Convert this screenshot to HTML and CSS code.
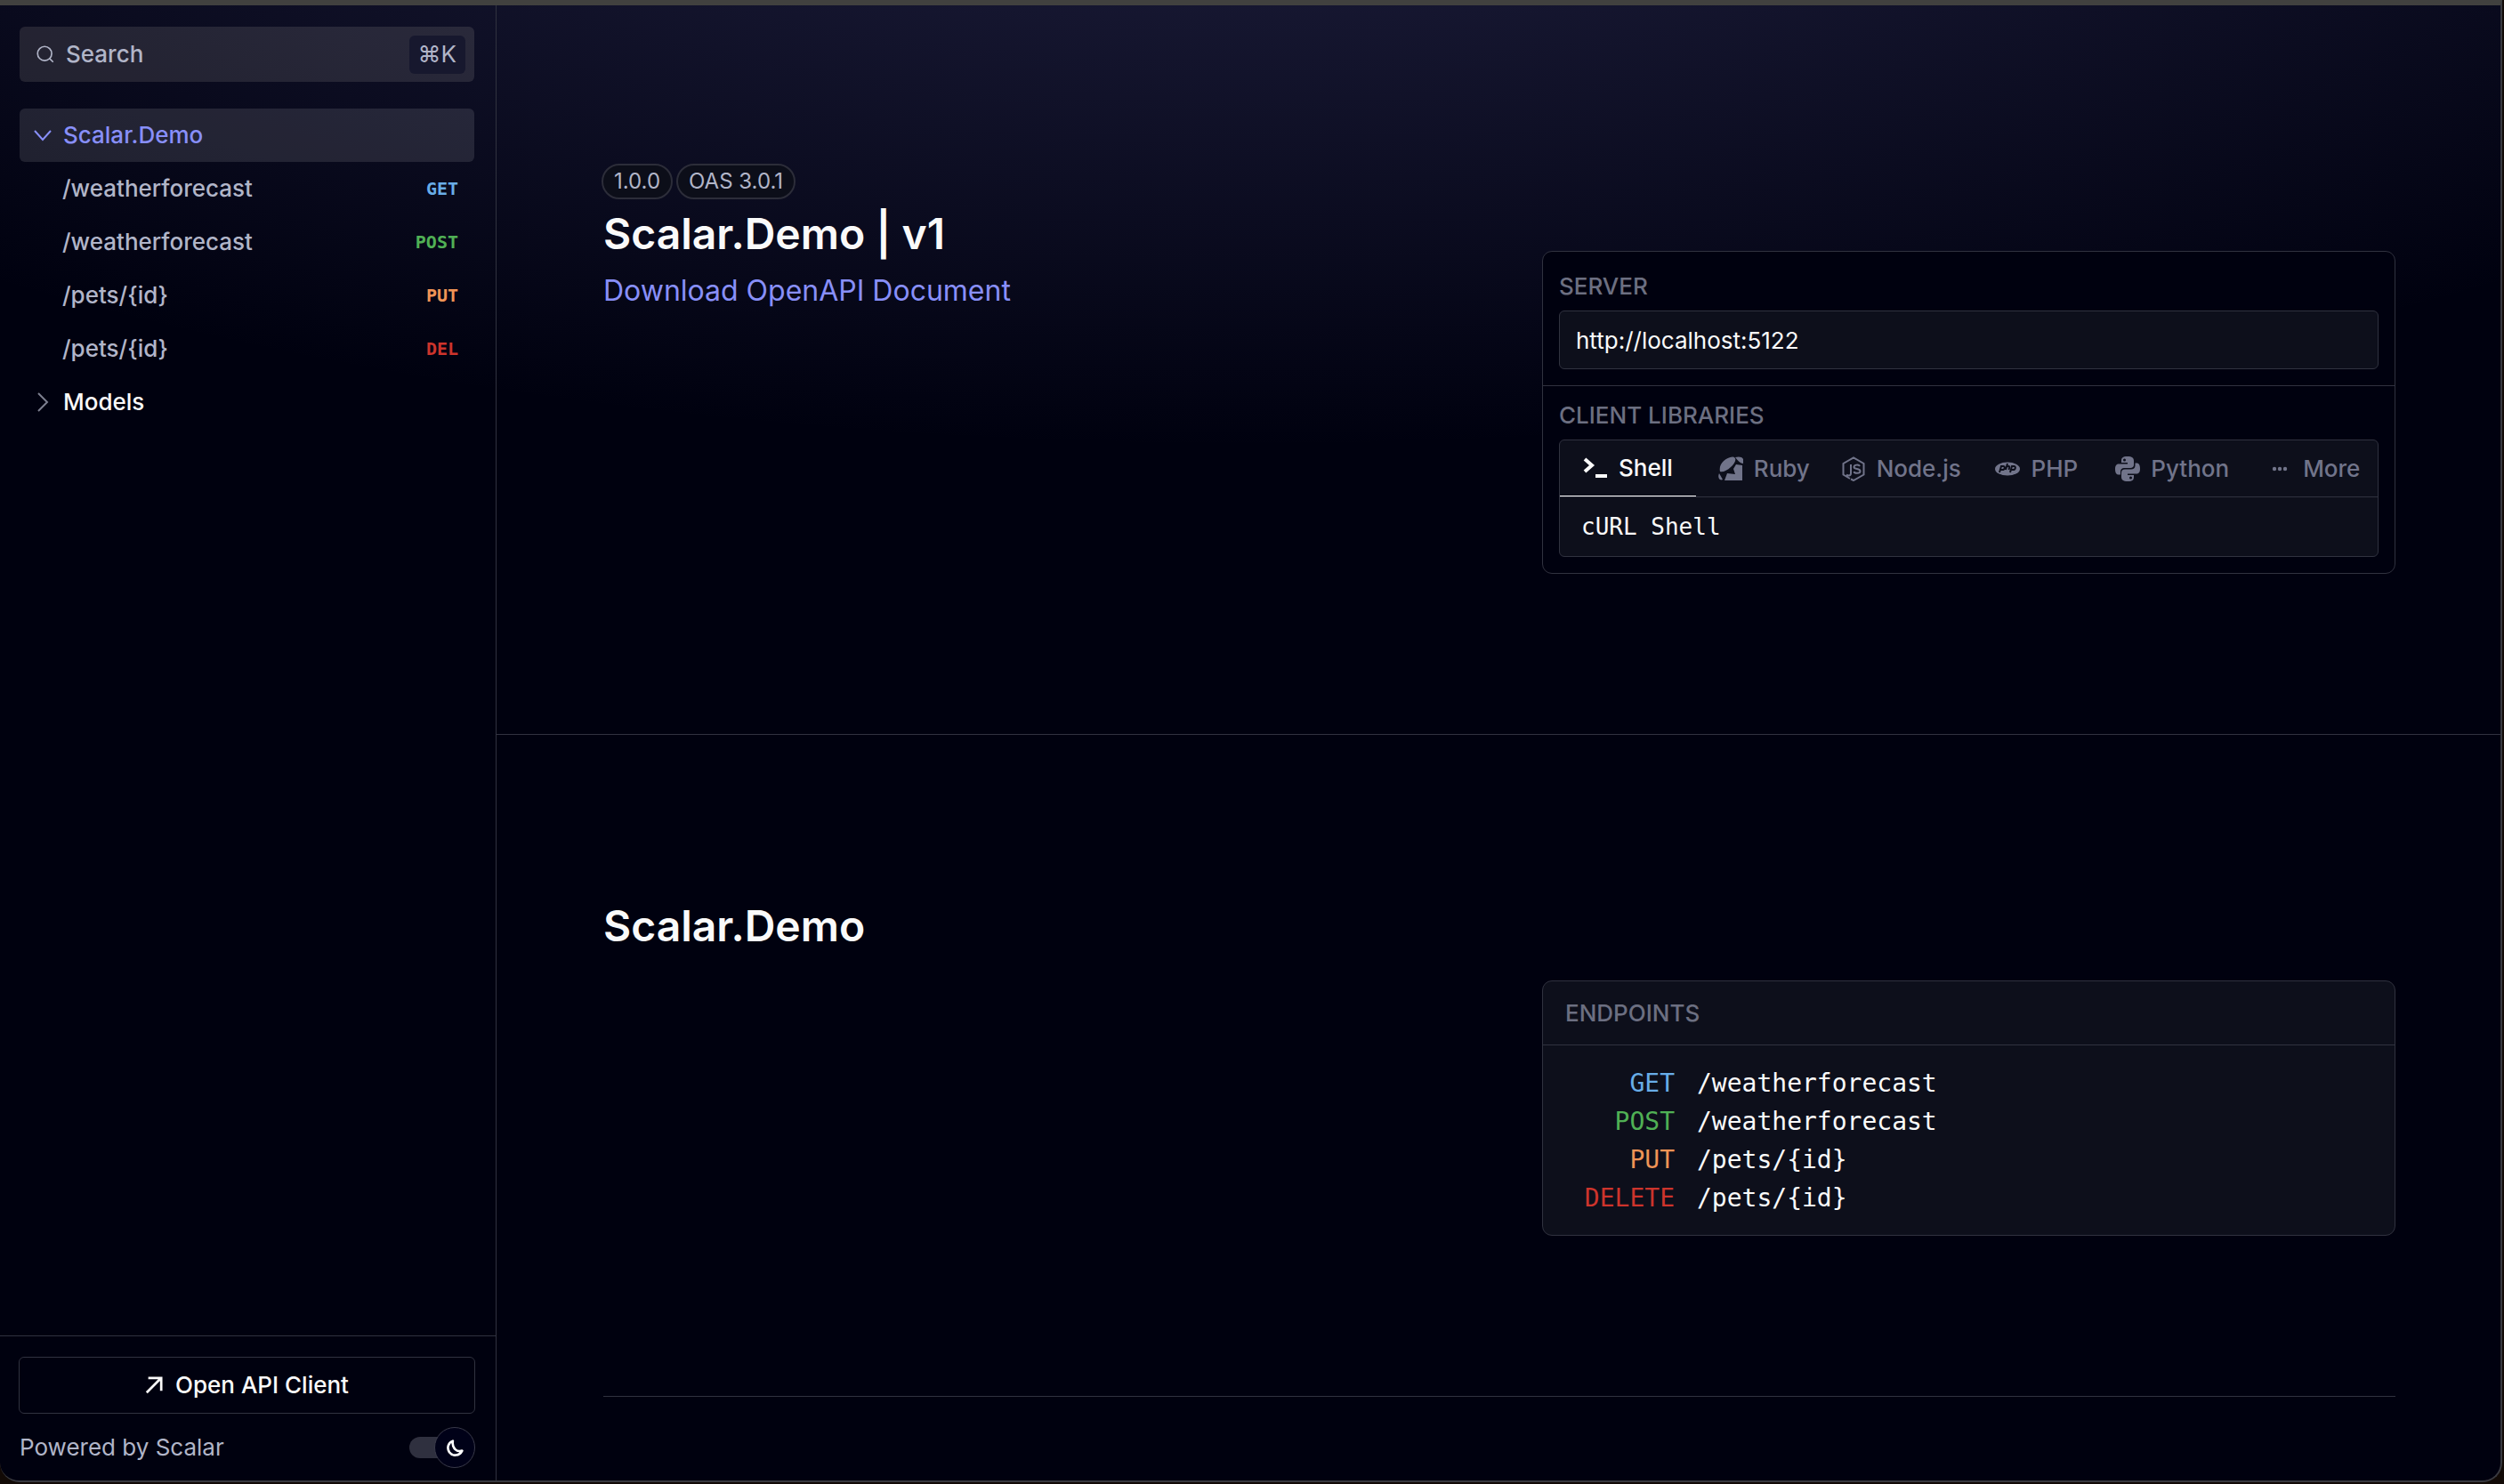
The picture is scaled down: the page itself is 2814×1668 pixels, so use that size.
FILE: index.html
```html
<!DOCTYPE html>
<html lang="en">
<head>
<meta charset="utf-8">
<title>Scalar.Demo | v1</title>
<meta name="viewport" content="width=device-width, initial-scale=1">
<link rel="stylesheet" href="styles.css">
</head>
<body>
<div class="window">
  <aside class="sidebar">
    <button class="search" type="button">
      <svg class="search-icon" viewBox="0 0 24 24" aria-hidden="true"><circle cx="11" cy="11" r="9.500"/><path d="M17.5 17.5l5 5"/></svg>
      <span class="search-label">Search</span>
      <kbd class="shortcut">⌘K</kbd>
    </button>
    <nav class="nav">
      <a class="nav-item nav-group active" href="#demo">
        <svg class="chevron" viewBox="0 0 20 24" aria-hidden="true"><path d="M1 7l9 10 9-10"/></svg>
        <span>Scalar.Demo</span>
      </a>
      <a class="nav-item" href="#get"><span>/weatherforecast</span><span class="verb get">GET</span></a>
      <a class="nav-item" href="#post"><span>/weatherforecast</span><span class="verb post">POST</span></a>
      <a class="nav-item" href="#put"><span>/pets/{id}</span><span class="verb put">PUT</span></a>
      <a class="nav-item" href="#delete"><span>/pets/{id}</span><span class="verb delete">DEL</span></a>
      <a class="nav-item nav-group models" href="#models">
        <svg class="chevron" viewBox="0 0 20 24" aria-hidden="true"><path d="M5 2l10 10-10 10"/></svg>
        <span>Models</span>
      </a>
    </nav>
    <footer class="sidebar-footer">
      <button class="client-button" type="button">
        <svg class="arrow" viewBox="0 0 22 22" aria-hidden="true"><path d="M2 20L20 2M4 2h16v16"/></svg>
        <span>Open API Client</span>
      </button>
      <div class="credits">
        <a class="powered" href="#scalar">Powered by Scalar</a>
        <button class="theme-toggle" type="button" aria-label="Toggle dark mode">
          <span class="track"></span>
          <span class="knob"><svg class="moon" viewBox="0 0 24 24" aria-hidden="true"><path d="M9 3C3 5 1 12 4.500 17.500C8.500 23 17.500 22.500 21 15.500C14 18 7.500 12 9 3Z"/></svg></span>
        </button>
      </div>
    </footer>
  </aside>
  <main class="content">
    <section class="intro">
      <div class="intro-text">
        <div class="badges"><span class="badge">1.0.0</span><span class="badge">OAS 3.0.1</span></div>
        <h1 class="heading">Scalar.Demo | v1</h1>
        <a class="download" href="#openapi">Download OpenAPI Document</a>
      </div>
      <div class="card setup">
        <div class="block">
          <label class="caption" for="server">Server</label>
          <input class="server" id="server" type="text" value="http://localhost:5122">
        </div>
        <div class="block">
          <div class="caption">Client Libraries</div>
          <div class="libraries">
            <div class="tabs">
              <button class="tab selected" type="button">
                <svg viewBox="0 0 28 28" aria-hidden="true"><path d="M2 4l8 7-8 7" fill="none" stroke="currentColor" stroke-width="4"/><path d="M14 21h13v4H14z"/></svg>
                <span>Shell</span>
              </button>
              <button class="tab" type="button">
                <svg viewBox="0 0 28 28" aria-hidden="true"><path d="M2 17C0 9 8 1 16 .5C22 1 19 8 14 12C10 16 5 18 2 17ZM19 1C22 0 27 0 28 3L28 8C25 8 22 5 19 1ZM27 10L27 27L7 27L10 19L19 20L17 14L20 9ZM1 19L5 26C1 28-1 23 1 19Z"/></svg>
                <span>Ruby</span>
              </button>
              <button class="tab" type="button">
                <svg class="line" viewBox="0 0 28 28" aria-hidden="true"><path d="M10 25L2.500 20.500V8L14 1.500L25.500 8V20.500L14 27L11 25.500M11 9V19C11 22 8 22 6 20.500M21 11C20 9 14.500 9 14.500 12C14.500 15 21.500 13 21.500 16.500C21.500 19.500 15 19.500 14.500 17"/></svg>
                <span>Node.js</span>
              </button>
              <button class="tab" type="button">
                <svg viewBox="0 0 28 28" aria-hidden="true"><ellipse cx="14" cy="14" rx="14" ry="7.500"/><path class="cut" d="M5 18L7 11H9C12 11 11 15 8.500 15H6M12 15L14 8M13 11.500C17 10 16.500 12 15.500 15M17 18L19 11H21C24 11 23 15 20.500 15H18"/></svg>
                <span>PHP</span>
              </button>
              <button class="tab" type="button">
                <svg viewBox="0 0 28 28" aria-hidden="true"><path d="M14 0C8 0 7 2 7 5V7H14V8.500H4C1 8.500 0 11 0 14C0 18 1 20.500 4 20.500H6V17C6 14.500 8 13 10 13H17C19.500 13 21 11.500 21 9.500V5C21 1.500 19 0 14 0Z"/><path d="M14 28C20 28 21 26 21 23V21H14V19.500H24C27 19.500 28 17 28 14C28 10 27 7.500 24 7.500H22.500V10.500C22.500 13 20.500 14.500 18 14.500H11C8.500 14.500 7 16 7 18.500V23C7 26.500 9 28 14 28Z"/><circle class="hole" cx="10.500" cy="4" r="1.500"/><circle class="hole" cx="17.500" cy="24" r="1.500"/></svg>
                <span>Python</span>
              </button>
              <button class="tab" type="button">
                <svg viewBox="0 0 28 28" aria-hidden="true"><circle cx="8" cy="14" r="2.200"/><circle cx="14" cy="14" r="2.200"/><circle cx="20" cy="14" r="2.200"/></svg>
                <span>More</span>
              </button>
            </div>
            <div class="library">cURL Shell</div>
          </div>
        </div>
      </div>
    </section>
    <section class="group" id="demo">
      <h2 class="heading">Scalar.Demo</h2>
      <div class="card endpoints">
        <div class="endpoints-title">Endpoints</div>
        <ul class="endpoint-list">
          <li><a href="#get"><span class="method get">GET</span><span>/weatherforecast</span></a></li>
          <li><a href="#post"><span class="method post">POST</span><span>/weatherforecast</span></a></li>
          <li><a href="#put"><span class="method put">PUT</span><span>/pets/{id}</span></a></li>
          <li><a href="#delete"><span class="method delete">DELETE</span><span>/pets/{id}</span></a></li>
        </ul>
      </div>
    </section>
  </main>
</div>
</body>
</html>
```
FILE: styles.css
```css
:root {
  --bg: #00010f;
  --panel: #0d0f1b;
  --line: #30323f;
  --text: #fafafa;
  --muted: #b1b5c8;
  --dim: #6c6f81;
  --accent: #888ff9;
  --sans: Inter, "Liberation Sans", sans-serif;
  --mono: "DejaVu Sans Mono", "Liberation Mono", monospace;
}

* { box-sizing: border-box; }

body {
  margin: 0;
  min-height: 100vh;
  display: flex;
  padding: 0 2px 2px 0;
  background: #120a06;
  color: var(--text);
  font: 400 26px/32px var(--sans);
}

a { color: inherit; text-decoration: none; }

button {
  margin: 0;
  padding: 0;
  border: 0;
  background: none;
  color: inherit;
  font: inherit;
  text-align: left;
}

.window {
  flex: 1;
  display: flex;
  border: solid #38393f;
  border-width: 6px 2px 2px 0;
  border-top-color: #41413f;
  border-radius: 0 0 22px 22px;
  background: radial-gradient(ellipse 80% 50% at 50% -20%, rgba(120, 119, 198, 0.3), transparent) var(--bg);
  overflow: hidden;
}

.sidebar {
  flex: none;
  width: 558px;
  display: flex;
  flex-direction: column;
  border-right: 1px solid var(--line);
  color: var(--muted);
  font-weight: 500;
}

.search {
  display: flex;
  align-items: center;
  gap: 13px;
  height: 62px;
  margin: 24px 24px 30px 22px;
  padding: 0 10px 0 19px;
  border-radius: 6px;
  background: rgba(255, 243, 230, 0.11);
}

.search-icon {
  width: 20px;
  height: 20px;
  fill: none;
  stroke: currentColor;
  stroke-width: 2;
  overflow: visible;
}

.search-label { flex: 1; }

.shortcut {
  padding: 5px 10px 6px;
  border-radius: 6px;
  background: #17182e;
  font: inherit;
  font-weight: 400;
}

.nav {
  flex: 1;
  padding: 0 24px 0 22px;
}

.nav-item {
  display: flex;
  align-items: center;
  justify-content: space-between;
  height: 60px;
  padding: 0 18px 0 48px;
  border-radius: 6px;
}

.nav-group {
  justify-content: flex-start;
  gap: 13px;
  padding-left: 16px;
}

.active {
  background: rgba(255, 255, 255, 0.11);
  color: var(--accent);
}

.models { color: var(--text); }
.models .chevron { color: #7c7f8f; }

.chevron {
  width: 20px;
  height: 24px;
  fill: none;
  stroke: currentColor;
  stroke-width: 2;
}

.verb { font: 700 20px/24px var(--mono); }

.get { color: #68ade8; }
.post { color: #50b055; }
.put { color: #f09456; }
.delete { color: #cd342c; }

.sidebar-footer {
  display: flex;
  flex-direction: column;
  gap: 15px;
  padding: 23px 23px 14px 21px;
  border-top: 1px solid var(--line);
}

.client-button {
  display: flex;
  align-items: center;
  justify-content: center;
  gap: 14px;
  height: 64px;
  border: 1px solid var(--line);
  border-radius: 6px;
  color: var(--text);
}

.arrow {
  width: 20px;
  height: 20px;
  fill: none;
  stroke: currentColor;
  stroke-width: 3;
}

.credits {
  display: flex;
  align-items: center;
  justify-content: space-between;
  padding-left: 1px;
}

.powered { font-weight: 400; }

.theme-toggle {
  display: flex;
  align-items: center;
}

.track {
  width: 50px;
  height: 24px;
  margin-right: -22px;
  border-radius: 12px;
  background: #2f303f;
}

.knob {
  position: relative;
  display: grid;
  place-items: center;
  width: 46px;
  height: 46px;
  border: 1px solid #3a3b4a;
  border-radius: 50%;
  background: #000118;
}

.moon {
  width: 21px;
  height: 21px;
  fill: none;
  stroke: #fff;
  stroke-width: 3;
  stroke-linejoin: round;
}

.content {
  flex: 1;
  min-width: 0;
}

.intro,
.group {
  display: grid;
  grid-template-columns: minmax(0, 1fr) minmax(0, 959px);
  column-gap: 96px;
  padding-left: 120px;
  padding-right: 118px;
}

.intro {
  padding-top: 178px;
  padding-bottom: 180px;
  border-bottom: 1px solid var(--line);
}

.badges {
  display: flex;
  gap: 4px;
  margin-left: -2px;
}

.badge {
  height: 40px;
  padding: 0 12px;
  border: 2px solid #2c2d39;
  border-radius: 20px;
  background: #0c0e19;
  color: var(--muted);
  font-size: 24px;
  line-height: 36px;
}

.heading {
  margin: 0;
  font-size: 48px;
  font-weight: 600;
  line-height: 60px;
}

.intro .heading { margin-top: 9px; }

.download {
  display: block;
  margin-top: 14px;
  color: var(--accent);
  font-size: 32px;
  line-height: 40px;
}

.card {
  border: 1px solid var(--line);
  border-radius: 11px;
  background: var(--bg);
}

.setup { margin-top: 98px; }

.block { padding: 22px 18px 18px; }

.block + .block {
  padding-top: 16px;
  border-top: 1px solid var(--line);
}

.caption {
  display: block;
  margin-bottom: 10px;
  color: var(--dim);
  font-weight: 500;
  line-height: 34px;
  text-transform: uppercase;
}

.server {
  display: block;
  width: 100%;
  height: 66px;
  padding: 0 18px;
  border: 1px solid var(--line);
  border-radius: 6px;
  outline: 0;
  background: var(--panel);
  color: var(--text);
  font: inherit;
}

.libraries {
  border: 1px solid var(--line);
  border-radius: 6px;
  background: var(--panel);
}

.tabs {
  display: grid;
  grid-template-columns: 178fr 138fr 174fr 135fr 171fr 124fr;
  justify-items: start;
  height: 64px;
  border-bottom: 1px solid var(--line);
}

.tab {
  display: flex;
  align-items: center;
  gap: 12px;
  color: #71748a;
  font-weight: 500;
  white-space: nowrap;
}

.tab svg {
  flex: none;
  width: 28px;
  height: 28px;
  fill: currentColor;
}

.tab .line {
  fill: none;
  stroke: currentColor;
  stroke-width: 2;
}

.tab .cut {
  fill: none;
  stroke: var(--panel);
  stroke-width: 2;
}

.tab .hole { fill: var(--panel); }

.selected {
  padding: 0 26px;
  border-bottom: 1px solid #fff;
  color: var(--text);
}

.library {
  padding: 17px 24px;
  font-family: var(--mono);
}

.group {
  margin: 0;
  padding-top: 185px;
}

.endpoints {
  margin-top: 91px;
  background: var(--panel);
}

.endpoints-title {
  padding: 20px 25px 19px;
  border-bottom: 1px solid var(--line);
  color: var(--dim);
  font-weight: 500;
  text-transform: uppercase;
}

.endpoint-list {
  margin: 0;
  padding: 21px 25px 20px;
  list-style: none;
  font: 28px/43px var(--mono);
}

.endpoint-list a {
  display: flex;
  gap: 25px;
}

.method {
  width: 123px;
  text-align: right;
}

.group::after {
  content: "";
  grid-column: 1 / -1;
  height: 1px;
  margin-top: 180px;
  background: var(--line);
}
```
